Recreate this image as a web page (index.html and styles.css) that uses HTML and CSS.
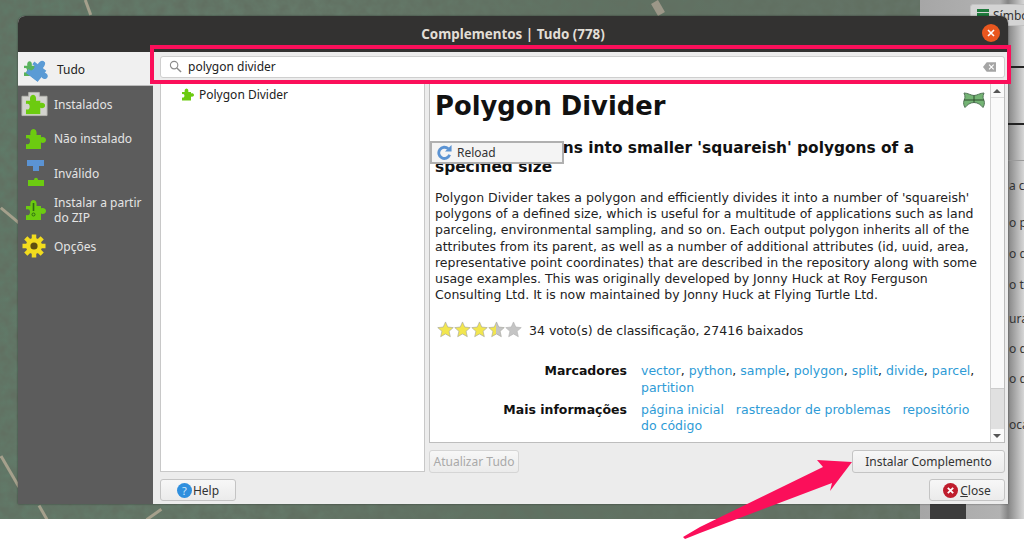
FILE: index.html
```html
<!DOCTYPE html>
<html lang="pt">
<head>
<meta charset="utf-8">
<title>Complementos</title>
<link rel="stylesheet" href="styles.css">
</head>
<body>
<svg class="defs" aria-hidden="true">
  <defs>
    <symbol id="pz" viewBox="0 0 20 20"><path d="M0 6H4.500C4 4 4.500 0 7.500 0S11 4 10.500 6H15V8.500C17 7.500 20 8.500 20 11S17 14.500 15 13.500V20H0V15C3 16 4 14 4 12S3 8.500 0 9.500Z"/></symbol>
    <symbol id="st" viewBox="0 0 18 18"><path d="M9 1l2.400 5.400 5.800.6-4.400 3.900 1.300 5.700L9 13.700l-5.100 2.900 1.300-5.700L.8 7l5.800-.6z"/></symbol>
    <linearGradient id="halfstar"><stop offset="50%" stop-color="#f2e64e"/><stop offset="50%" stop-color="#c4c4c4"/></linearGradient>
    <filter id="mott" x="0" y="0" width="100%" height="100%"><feTurbulence type="fractalNoise" baseFrequency="0.09" numOctaves="3" seed="7"/><feColorMatrix type="matrix" values="0 0 0 0 0.12  0 0 0 0 0.16  0 0 0 0 0.12  1.600 0 0 0 -0.300"/></filter>
  </defs>
</svg>
<div class="screen">
  <div class="backdrop">
    <div class="map">
      <svg class="map-noise"><rect width="100%" height="100%" filter="url(#mott)"/></svg>
      <i class="road r1"></i><i class="road r2"></i><i class="road r3"></i><i class="road r4"></i><i class="road r5"></i><i class="road r6"></i>
    </div>
    <div class="qgis">
      <div class="dark-foot"></div>
      <i class="rule l1"></i><i class="rule l2"></i><i class="rule l3"></i>
      <div class="tool"><span class="tool-ic"></span>Símbolo</div>
      <div class="peek p1">a ca</div><div class="peek p2">o p</div><div class="peek p3">o do</div><div class="peek p4">o t</div><div class="peek p5">ura</div><div class="peek p6">o do</div><div class="peek p7">o da</div><div class="peek p8">oca</div>
    </div>
  </div>

  <section class="dialog">
    <header class="titlebar">
      <span>Complementos | Tudo (778)</span>
      <span class="win-close"><svg viewBox="0 0 10 10"><path d="M2 2l6 6M8 2l-6 6"/></svg></span>
    </header>
    <div class="body">
      <nav class="side">
        <div class="nav-item active">
          <svg class="ic-big" viewBox="0 0 28 28"><use href="#pz" x="0" y="0" width="16" height="25" class="g-soft"/><g transform="rotate(38 17 15)"><use href="#pz" x="6" y="4" width="22" height="22" class="blue"/></g></svg>
          <span>Tudo</span>
        </div>
        <div class="nav-item">
          <svg class="ic-big ic-shift" viewBox="0 0 28 26"><path fill="#d3d3cf" stroke="#b5b5b0" d="M1 5h7V1h11v4h8v20H1z"/><use href="#pz" x="5" y="3" width="20" height="21" class="green"/></svg>
          <span>Instalados</span>
        </div>
        <div class="nav-item">
          <svg class="ic"><use href="#pz" class="green"/></svg>
          <span>Não instalado</span>
        </div>
        <div class="nav-item">
          <svg class="ic ic-tall" viewBox="0 0 20 28"><path fill="#5b93d3" d="M1 1h17v6h-5v5H7V7H1z"/><path fill="#6ccb10" d="M2 21h6c0-3 4-3 4 0h6v6H2z"/></svg>
          <span>Inválido</span>
        </div>
        <div class="nav-item two">
          <svg class="ic" viewBox="0 0 20 20"><use href="#pz" class="green" width="20" height="20"/><path fill="none" stroke="#2e6b10" stroke-width="1.600" d="M7.500 3v8"/><circle cx="7.500" cy="14.500" r="1.500" fill="none" stroke="#2e6b10"/></svg>
          <span>Instalar a partir<br>do ZIP</span>
        </div>
        <div class="nav-item gear">
          <svg class="ic-gear" viewBox="0 0 24 24"><path stroke="#f2dc1e" stroke-width="4.500" d="M12 .5v23M.5 12h23M3.800 3.800l16.400 16.400M20.200 3.800L3.800 20.200"/><circle cx="12" cy="12" r="8" fill="#f2dc1e"/><circle cx="12" cy="12" r="3.600" fill="#5d4f10"/></svg>
          <span>Opções</span>
        </div>
      </nav>

      <div class="main">
        <div class="search">
          <svg class="s-ic" viewBox="0 0 14 14"><circle cx="5.500" cy="5.500" r="4" fill="none" stroke="#8b8b8b" stroke-width="1.200"/><path d="M8.500 8.500L13 13" stroke="#8b8b8b" stroke-width="1.500"/></svg>
          <span class="s-text">polygon divider</span>
          <svg class="s-clear" viewBox="0 0 14 10"><path fill="#a5a5a5" d="M4 0h10v10H4L0 5z"/><path d="M6.500 2.500l5 5M11.500 2.500l-5 5" stroke="#fff" stroke-width="1.200"/></svg>
        </div>

        <div class="panes">
          <div class="list">
            <div class="row">
              <svg class="row-ic"><use href="#pz" class="green"/></svg>
              <span>Polygon Divider</span>
            </div>
          </div>
          <div class="right-col">
            <div class="details">
              <article class="doc">
                <svg class="plug-logo" viewBox="0 0 22 17"><path fill="#74b474" stroke="#54765a" d="M1 1C5 1 8 3.500 11 3.500S17 1 21 1C19.500 5 20 6 21 8.500 22 11 21 14 20 15.500 18 13 15 10.500 11 10.500S4 13 2 15.500C1 14 0 11 1 8.500 2 6 2.500 5 1 1Z"/><path stroke="#2f4f2f" fill="none" d="M11 3.500v7M1 8h20"/></svg>
                <h1>Polygon Divider</h1>
                <h2>Divides polygons into smaller 'squareish' polygons of a specified size</h2>
                <p>Polygon Divider takes a polygon and efficiently divides it into a number of 'squareish' polygons of a defined size, which is useful for a multitude of applications such as land parceling, environmental sampling, and so on. Each output polygon inherits all of the attributes from its parent, as well as a number of additional attributes (id, uuid, area, representative point coordinates) that are described in the repository along with some usage examples. This was originally developed by Jonny Huck at Roy Ferguson Consulting Ltd. It is now maintained by Jonny Huck at Flying Turtle Ltd.</p>
                <div class="rating">
                  <span class="stars">
                    <svg class="star"><use href="#st"/></svg><svg class="star"><use href="#st"/></svg><svg class="star"><use href="#st"/></svg><svg class="star half"><use href="#st"/></svg><svg class="star off"><use href="#st"/></svg>
                  </span>
                  <span>34 voto(s) de classificação, 27416 baixados</span>
                </div>
                <div class="meta">
                  <div class="label">Marcadores</div>
                  <div class="links"><a>vector</a><span class="comma">,</span> <a>python</a><span class="comma">,</span> <a>sample</a><span class="comma">,</span> <a>polygon</a><span class="comma">,</span> <a>split</a><span class="comma">,</span> <a>divide</a><span class="comma">,</span> <a>parcel</a><span class="comma">,</span> <a>partition</a></div>
                  <div class="label">Mais informações</div>
                  <div class="links"><a>página inicial</a> &nbsp; <a>rastreador de problemas</a> &nbsp; <a>repositório do código</a></div>
                  <div class="label">Versão</div>
                  <div class="links dark">1.0 para QGIS 3, disponível</div>
                </div>
              </article>
              <div class="reload"><svg viewBox="0 0 16 16"><path fill="none" stroke="#5b93d3" stroke-width="3" d="M13.500 10.500a6 6 0 1 1-1.500-6.500"/><path fill="#5b93d3" d="M8.500 7h7V0z"/></svg><span>Reload</span></div>
              <div class="scroll">
                <div class="arrow up"></div>
                <div class="thumb"></div>
                <div class="track"></div>
                <div class="arrow down"></div>
              </div>
            </div>
            <div class="action-row">
              <button class="btn disabled">Atualizar Tudo</button>
              <button class="btn install">Instalar Complemento</button>
            </div>
          </div>
        </div>

        <div class="foot">
          <button class="btn help"><span class="help-ic">?</span>Help</button>
          <button class="btn close"><span class="close-ic"><svg viewBox="0 0 10 10"><path d="M2 2l6 6M8 2l-6 6"/></svg></span><span><u>C</u>lose</span></button>
        </div>
      </div>
    </div>
  </section>

  <div class="highlight"></div>
  <svg class="arrow-svg" viewBox="0 0 1024 539"><path fill="#fb0f5a" d="M683 537L685 539L700 533L832 483L830 491L852 462L817 460L823 467L700 527Z"/></svg>
</div>
</body>
</html>
```
FILE: styles.css
```css
* { box-sizing: border-box; }
html, body { margin: 0; padding: 0; background: #fff; }
body { font-family: "Noto Sans", "DejaVu Sans", sans-serif; overflow: hidden; }
.defs { position: absolute; width: 0; height: 0; }
.screen { position: relative; width: 1024px; height: 539px; overflow: hidden; background: #fff; }

.backdrop { display: flex; height: 519px; }
.map {
  position: relative; width: 920px; overflow: hidden;
  background: linear-gradient(100deg, #5f7a68 0%, #667b6b 30%, #5f7262 62%, #67756a 100%);
}
.map-noise { position: absolute; left: 0; top: 0; width: 100%; height: 100%; }
.road { position: absolute; display: block; height: 3px; background: #a5a08c; }
.r1 { left: -2px; top: 214px; width: 24px; transform: rotate(40deg); }
.r2 { left: -8px; top: 470px; width: 36px; transform: rotate(60deg); }
.r3 { left: 145px; top: 513px; width: 18px; transform: rotate(-35deg); }
.r4 { left: 35px; top: 511px; width: 16px; transform: rotate(60deg); }
.r5 { left: 80px; top: 6px; width: 16px; transform: rotate(70deg); }
.r6 { left: 651px; top: 4px; width: 14px; height: 8px; background: #9c9788; transform: rotate(60deg); }
.qgis {
  position: relative; flex: 1;
  background: linear-gradient(90deg, #a6a6a6 0, #b2b2b2 80px, #858585 88px, #d6d6d6 104px);
  font-size: 12px; color: #333;
}
.dark-foot { position: absolute; left: 10px; top: 504px; width: 36px; height: 15px; background: #3c3c3c; }
.rule { position: absolute; left: 88px; right: 0; display: block; }
.l1 { top: 66px; height: 2px; background: #222; }
.l2 { top: 123px; height: 2px; background: #222; }
.l3 { top: 160px; height: 1px; background: #9a9a9a; }
.tool { position: absolute; left: 50px; top: 4px; width: 60px; height: 22px; padding-left: 22px; line-height: 22px; border: 1px solid #c2c2c2; border-radius: 3px; background: #d4d4d4; white-space: nowrap; overflow: hidden; }
.tool-ic { position: absolute; left: 6px; top: 4px; width: 12px; height: 12px; background: linear-gradient(#1f7a3d 0 3px, #d4d4d4 3px 4px, #1f7a3d 4px 8px, #d4d4d4 8px 9px, #1f7a3d 9px); }
.peek { position: absolute; left: 89px; white-space: nowrap; line-height: 16px; }
.p1 { top: 178px; } .p2 { top: 215px; } .p3 { top: 246px; } .p4 { top: 277px; }
.p5 { top: 311px; } .p6 { top: 341px; } .p7 { top: 371px; } .p8 { top: 417px; }

.dialog {
  position: absolute; left: 18px; top: 16px; width: 990px; height: 488px;
  display: flex; flex-direction: column; background: #ececec;
  border-radius: 7px 7px 0 0; box-shadow: 0 0 2px rgba(0,0,0,.55);
}
.titlebar {
  height: 36px; flex: none; display: flex; align-items: center; justify-content: center;
  position: relative; background: #333231; color: #e2ded6; font-size: 13.400px; font-weight: 700;
  border-radius: 7px 7px 0 0;
}
.win-close { position: absolute; right: 8px; top: 8px; width: 18px; height: 18px; border-radius: 50%; background: #e9571f; }
.win-close svg { display: block; width: 18px; height: 18px; padding: 4px; }
.win-close path { stroke: #fff; stroke-width: 1.600; fill: none; }

.body { flex: 1; display: flex; min-height: 0; }
.side { width: 135px; flex: none; background: #5c5c5c; color: #e4e4e4; font-size: 12px; line-height: 15px; }
.nav-item { display: flex; align-items: center; height: 34.500px; padding-left: 8px; gap: 8px; }
.nav-item.active { height: 34px; background: #f0f0f0; color: #222; padding-left: 6px; gap: 7px; border-bottom: 1px solid #bbb; margin-bottom: 1px; padding-top: 2px; }
.nav-item.two { height: 38px; }
.nav-item.gear { height: 33px; padding-top: 2px; padding-left: 4px; }
.green { fill: #6ccb10; }
.g-soft { fill: #58b25c; }
.blue { fill: #5b9bd5; }
.ic { width: 20px; height: 20px; flex: none; }
.ic-big { width: 26px; height: 26px; flex: none; }
.ic-shift { margin-left: -5px; margin-right: -2px; width: 27px; }
.ic-tall { height: 28px; width: 20px; }
.ic-gear { width: 24px; height: 24px; flex: none; }

.main { flex: 1; min-width: 0; display: flex; flex-direction: column; padding: 4px 3px 0 7px; }
.search {
  height: 22px; flex: none; display: flex; align-items: center; background: #fff;
  border: 1px solid #cfcfcf; border-radius: 3px; padding: 0 8px 1px; font-size: 12px; color: #222; margin-bottom: 6px;
}
.s-ic { width: 13px; height: 13px; flex: none; margin-right: 6px; }
.s-text { flex: 1; }
.s-clear { width: 13px; height: 10px; flex: none; }

.panes { flex: 1; min-height: 0; display: flex; gap: 4px; }
.list { width: 265px; flex: none; height: 388px; background: #fff; border: 1px solid #c8c8c8; border-top: 0; font-size: 12px; color: #222; padding: 1px 0 0 21px; }
.row { display: flex; align-items: center; gap: 5px; height: 18px; }
.row-ic { width: 12px; height: 13px; flex: none; }

.right-col { flex: 1; min-width: 0; display: flex; flex-direction: column; }
.details { position: relative; height: 359px; flex: none; background: #fff; border: 1px solid #bdbdbd; border-top: 0; overflow: hidden; display: flex; }
.doc { flex: 1; min-width: 0; height: 358px; overflow: hidden; padding: 0 10px 0 5px; font-family: "DejaVu Sans", sans-serif; font-size: 12.500px; line-height: 16.200px; color: #222; }
.plug-logo { float: right; width: 22px; height: 17px; margin: 8px -5px 0 0; }
.doc h1 { margin: 5px 0 0; font-size: 25.800px; line-height: 34px; font-weight: 700; color: #111; }
.doc h2 { margin: 15.500px 0 0; font-size: 15.400px; line-height: 19px; font-weight: 700; color: #111; }
.doc p { margin: 13.500px 0 0; }
.rating { display: flex; align-items: center; margin-top: 17px; height: 22px; gap: 7px; padding-left: 2px; }
.stars { display: flex; }
.star { width: 17px; height: 17px; margin-top: -4px; fill: #f2e64e; stroke: #a9a9a0; stroke-width: .7; }
.star.half { fill: url(#halfstar); }
.star.off { fill: #c4c4c4; stroke: #b5b5b5; }
.meta { display: grid; grid-template-columns: 192px 1fr; column-gap: 14px; row-gap: 6px; margin-top: 21px; }
.label { text-align: right; font-weight: 700; color: #111; }
.links { color: #2e9bd6; }
.comma { color: #222; }
.links.dark { color: #222; }
.reload { position: absolute; left: 0; top: 57px; width: 134px; height: 23px; display: flex; align-items: center; gap: 5px; padding-left: 5px; background: #f4f4f4; border: 2px solid #b0b0b0; font-size: 12px; color: #333; }
.reload svg { width: 15px; height: 15px; flex: none; }
.scroll { width: 14px; flex: none; display: flex; flex-direction: column; border-left: 1px solid #d2d2d2; background: #e0e0e0; }
.arrow { height: 13px; flex: none; background: #fafafa; position: relative; }
.arrow::after { content: ""; position: absolute; left: 2px; top: 5px; border: 4px solid transparent; }
.arrow.up::after { border-bottom-color: #555; border-top-width: 0; }
.arrow.down::after { border-top-color: #555; border-bottom-width: 0; }
.thumb { height: 292px; flex: none; background: #fafafa; border-top: 1px solid #ddd; border-bottom: 1px solid #ccc; }
.track { flex: 1; }

.action-row { flex: none; display: flex; justify-content: space-between; padding-top: 7px; }
.btn { height: 23px; padding: 0; border: 1px solid #c4c4c4; border-radius: 3px; background: linear-gradient(#f7f7f7, #ebebeb); font: 12px "Noto Sans", sans-serif; color: #333; display: flex; align-items: center; justify-content: center; }
.btn.disabled { width: 90px; color: #a9a9a9; border-color: #d5d5d5; }
.btn.install { width: 153px; }
.foot { flex: none; display: flex; justify-content: space-between; height: 31px; padding-top: 6px; }
.foot .btn { height: 22px; }
.btn.help { width: 76px; gap: 1px; }
.help-ic { width: 15px; height: 15px; border-radius: 50%; background: #2f8fde; color: #cfe6fa; font-size: 11px; line-height: 15px; text-align: center; }
.btn.close { width: 76px; gap: 2px; }
.close-ic { width: 15px; height: 15px; border-radius: 50%; background: #bf1d2d; display: block; }
.close-ic svg { display: block; width: 15px; height: 15px; padding: 3px; }
.close-ic path { stroke: #fff; stroke-width: 2; fill: none; }

.highlight { position: absolute; left: 150px; top: 45px; width: 861px; height: 39px; border: 4px solid #fb0f5a; pointer-events: none; }
.arrow-svg { position: absolute; left: 0; top: 0; width: 1024px; height: 539px; pointer-events: none; }
```
